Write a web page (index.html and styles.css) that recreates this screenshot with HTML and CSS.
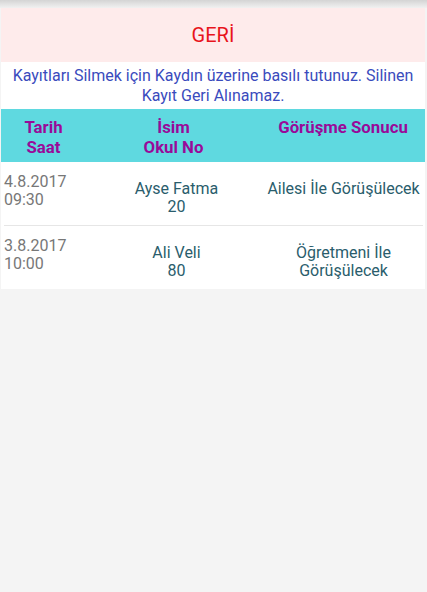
FILE: index.html
```html
<!DOCTYPE html>
<html lang="tr">
<head>
    <meta charset="UTF-8">
    <meta name="viewport" content="width=device-width, initial-scale=1.0">
    <title>Kayıtlar</title>
    <link rel="stylesheet" href="styles.css">
</head>
<body>
    <div class="topbar"></div>

    <div class="page">
        <button class="back-btn">GERİ</button>

        <p class="notice">Kayıtları Silmek için Kaydın üzerine basılı tutunuz. Silinen Kayıt Geri Alınamaz.</p>

        <div class="list-head">
            <div class="col-date">Tarih<br>Saat</div>
            <div class="col-name">İsim<br>Okul No</div>
            <div class="col-result">Görüşme Sonucu</div>
        </div>

        <div class="list">
            <div class="row">
                <div class="col-date">4.8.2017<br>09:30</div>
                <div class="col-name">Ayse Fatma<br>20</div>
                <div class="col-result">Ailesi İle Görüşülecek</div>
            </div>
            <div class="row">
                <div class="col-date">3.8.2017<br>10:00</div>
                <div class="col-name">Ali Veli<br>80</div>
                <div class="col-result">Öğretmeni İle Görüşülecek</div>
            </div>
        </div>
    </div>
</body>
</html>
```

FILE: styles.css
```css
/* General */
body {
    font-family: 'Roboto', 'Liberation Sans', sans-serif;
    background-color: #f4f4f4;
    margin: 0;
    padding: 0;
}

/* Sombra de la barra superior */
.topbar {
    height: 8px;
    background: linear-gradient(#d4d4d4, #f1f1f1);
}

.page {
    margin: 0 2px 0 1px;
}

/* Boton volver */
.back-btn {
    display: block;
    width: 100%;
    height: 54px;
    border: none;
    background-color: #feebeb;
    color: #e8141c;
    font-family: inherit;
    font-size: 20px;
    padding: 0;
}

.notice {
    margin: 0;
    padding: 4px 4px 3px;
    background-color: #fff;
    color: #3a4bbd;
    font-size: 16px;
    line-height: 20px;
    text-align: center;
}

/* Lista */
.list-head,
.row {
    display: grid;
    grid-template-columns: 85px 175px 1fr;
    font-size: 16px;
}

.list-head {
    background-color: #5fd9e0;
    color: #990a99;
    font-size: 16.8px;
    font-weight: bold;
    line-height: 20px;
    padding: 8px 0 5px;
    text-align: center;
}

.list {
    background-color: #fff;
}

.row {
    padding: 11px 0 9px;
    line-height: 18px;
    color: #2a5d6c;
    text-align: center;
    border-bottom: 1px solid #e6e6e6;
    margin: 0 2px 0 3px;
}

.row:last-child {
    border-bottom: none;
}

.row .col-name,
.row .col-result {
    padding-top: 7px;
}

.row .col-date {
    text-align: left;
    color: #777;
}
```
